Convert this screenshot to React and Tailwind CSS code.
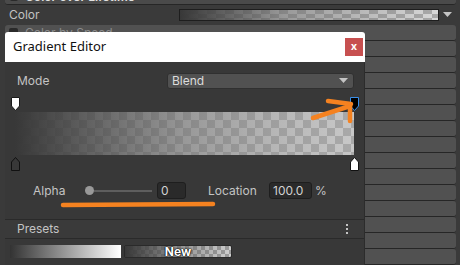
import React from 'react';

const CHECKER =
    'bg-[conic-gradient(#a9a9a9_25%,#c8c8c8_0_50%,#a9a9a9_0_75%,#c8c8c8_0)]';

// alpha / color key markers on the gradient bar
const KeyDown = ({ fill, stroke }) => (
    <svg width="9" height="14" viewBox="0 0 9 14">
        <path d="M0.5 0.5 H8.5 V9 L4.5 13.5 L0.5 9 Z" fill={fill} stroke={stroke} strokeWidth="1" />
    </svg>
);

const KeyUp = ({ fill, stroke }) => (
    <svg width="9" height="14" viewBox="0 0 9 14">
        <path d="M0.5 13.5 V5 L4.5 0.5 L8.5 5 V13.5 Z" fill={fill} stroke={stroke} strokeWidth="1" />
    </svg>
);

// module rows of the inspector; the window hides their labels except the first
const ModuleRow = ({ label }) => (
    <div className="h-[16px] ml-[5px] mr-[4px] bg-[#515151] border-b border-[#262626] rounded-[3px] flex items-center pl-[4px] gap-[7px]">
        <div className="w-[9px] h-[9px] bg-[#2a2a2a] rounded-[2px]" />
        {label && <span className="text-[12px] text-[#8c8c8c] leading-none">{label}</span>}
    </div>
);

const Field = ({ value, w }) => (
    <div
        className={`${w} h-[17px] bg-[#2a2a2a] border border-[#1e1e1e] rounded-[3px] flex items-center px-[3px] text-[12px] text-[#d2d2d2]`}
    >
        {value}
    </div>
);

export default function App() {
    return (
        <div
            className="relative w-[460px] h-[265px] overflow-hidden bg-[#3a3a3a]"
            style={{ fontFamily: 'Inter, "Noto Sans", sans-serif' }}
        >
            {/* inspector behind the window */}
            <div className="flex flex-col">
                <div className="h-[16px] mt-[-11px] ml-[5px] mr-[4px] bg-[#4a4a4a] border-b border-[#262626] rounded-[3px] flex items-center pl-[5px] gap-[7px]">
                    <div className="w-[8px] h-[8px] bg-[#2a2a2a] rounded-[2px]" />
                    <span className="text-[12px] text-[#e0e0e0] font-semibold leading-none">Color over Lifetime</span>
                </div>
                <div className="h-[20px] flex items-center pl-[9px] pr-[8px]">
                    <span className="text-[12px] text-[#c2c2c2] w-[170px]">Color</span>
                    <div className="w-[261px] h-[12px] border border-[#1e1e1e] bg-[conic-gradient(#a9a9a9_25%,#d8d8d8_0_50%,#a9a9a9_0_75%,#d8d8d8_0)] bg-[length:18px_8px]">
                        <div className="w-full h-full bg-[linear-gradient(to_right,rgba(56,56,56,1),rgba(110,110,110,0.6)_40%,rgba(255,255,255,0))]" />
                    </div>
                    <svg className="ml-[4px]" width="9" height="6" viewBox="0 0 9 6">
                        <path d="M0 0 H9 L4.5 5 Z" fill="#c4c4c4" />
                    </svg>
                </div>
                <ModuleRow label="Color by Speed" />
                {Array.from({ length: 14 }).map((_, i) => (
                    <ModuleRow key={i} />
                ))}
            </div>

            {/* Gradient Editor window */}
            <div className="absolute left-[5px] top-[32px] w-[360px] flex flex-col">
                <div className="h-[30px] bg-white rounded-t-[3px] flex items-center pl-[8px] pr-[2px]">
                    <span
                        className="text-[13px] text-[#111]"
                        style={{ fontFamily: '"Noto Sans", "Open Sans", sans-serif' }}
                    >
                        Gradient Editor
                    </span>
                    <div className="ml-auto w-[18px] h-[18px] bg-[#c75050] flex items-center justify-center text-white text-[11px] font-bold leading-none pb-[2px]">
                        x
                    </div>
                </div>

                <div className="h-[240px] bg-[#383838] border-r border-[#2c2c2c] flex flex-col">
                    <div className="mt-[11px] h-[16px] flex items-center pl-[12px] pr-[10px]">
                        <span className="text-[12px] text-[#c4c4c4]">Mode</span>
                        <div className="ml-auto w-[187px] h-[16px] bg-[#515151] border border-[#303030] rounded-[3px] flex items-center pl-[4px] pr-[5px]">
                            <span className="text-[12px] text-[#dcdcdc]">Blend</span>
                            <svg className="ml-auto" width="9" height="6" viewBox="0 0 9 6">
                                <path d="M0 0 H9 L4.5 5 Z" fill="#c4c4c4" />
                            </svg>
                        </div>
                    </div>

                    <div className="mt-[8px] h-[14px] flex justify-between pl-[6px] pr-[5px]">
                        <KeyDown fill="#ffffff" stroke="#1a1a1a" />
                        <KeyDown fill="#000000" stroke="#3a8ee6" />
                    </div>

                    <div className={`mt-[1px] ml-[10px] w-[339px] h-[43px] ${CHECKER} bg-[length:16px_16px]`}>
                        <div className="w-full h-full bg-[linear-gradient(to_right,rgba(56,56,56,1),rgba(72,72,72,0.75)_25%,rgba(105,105,105,0.5)_50%,rgba(124,124,124,0.25)_75%,rgba(140,140,140,0))]" />
                    </div>

                    <div className="mt-[2px] h-[14px] flex justify-between pl-[6px] pr-[5px]">
                        <KeyUp fill="#383838" stroke="#111111" />
                        <KeyUp fill="#ffffff" stroke="#111111" />
                    </div>

                    <div className="mt-[11px] h-[17px] flex items-center pl-[28px]">
                        <span className="w-[52px] text-[12px] text-[#c4c4c4]">Alpha</span>
                        <div className="w-[67px] flex items-center">
                            <div className="w-[9px] h-[9px] rounded-full bg-[#999999]" />
                            <div className="flex-1 h-[2px] bg-[#5e5e5e]" />
                        </div>
                        <div className="ml-[5px]">
                            <Field value="0" w="w-[29px]" />
                        </div>
                        <span className="ml-[22px] w-[61px] text-[12px] text-[#c4c4c4]">Location</span>
                        <Field value="100.0" w="w-[43px]" />
                        <span className="ml-[3px] text-[12px] text-[#c4c4c4]">%</span>
                    </div>

                    <div className="mt-[20px] h-[20px] border-y border-[#2a2a2a] bg-[#3a3a3a] flex items-center pl-[12px] pr-[16px]">
                        <span className="text-[12px] text-[#c4c4c4]">Presets</span>
                        <div className="ml-auto flex flex-col gap-[2px]">
                            <div className="w-[2px] h-[2px] bg-[#c4c4c4]" />
                            <div className="w-[2px] h-[2px] bg-[#c4c4c4]" />
                            <div className="w-[2px] h-[2px] bg-[#c4c4c4]" />
                        </div>
                    </div>

                    <div className="mt-[6px] flex gap-[3px] pl-[5px]">
                        <div className="w-[111px] h-[13px] bg-[linear-gradient(to_right,#333333,#ffffff)]" />
                        <div className="w-[108px] h-[13px] rounded-[2px] border border-[#2a2a2a] bg-[conic-gradient(#9c9c9c_25%,#cfcfcf_0_50%,#9c9c9c_0_75%,#cfcfcf_0)] bg-[length:8px_8px]">
                            <div className="w-full h-full bg-[linear-gradient(to_right,rgba(56,56,56,1),rgba(90,90,90,0.6)_45%,rgba(255,255,255,0))] flex items-center justify-center">
                                <span className="text-[12px] font-bold text-white leading-none [text-shadow:0_0_2px_#000,0_0_1px_#000,0_0_1px_#000]">
                                    New
                                </span>
                            </div>
                        </div>
                    </div>
                </div>
            </div>

            {/* orange annotations */}
            <svg className="absolute left-0 top-0 pointer-events-none" width="460" height="265" viewBox="0 0 460 265">
                <g stroke="#f58220" strokeWidth="4.5" strokeLinecap="round" fill="none">
                    <path d="M313 118 L350 106" />
                    <path d="M328 101 L351 104" />
                    <path d="M350 106 L350 121" />
                    <path d="M63 205 L213 204" />
                </g>
            </svg>
        </div>
    );
}
